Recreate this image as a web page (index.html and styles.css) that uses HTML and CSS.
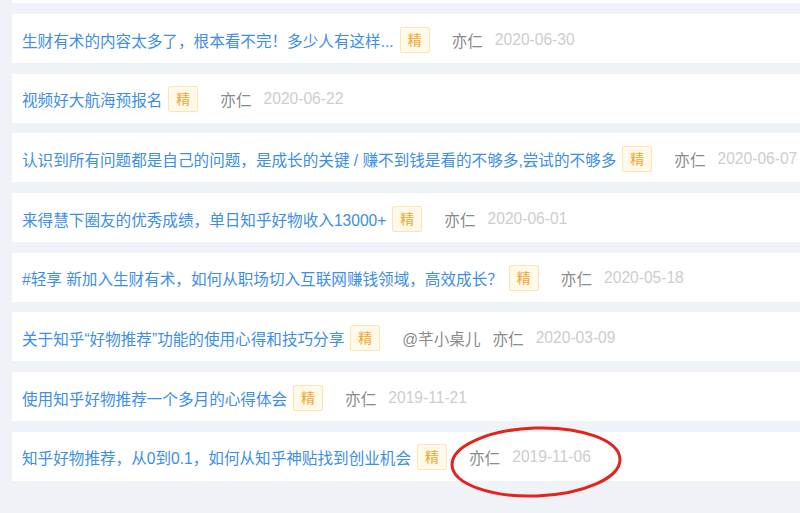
FILE: index.html
```html
<!DOCTYPE html>
<html>
	<head>
		<meta charset="UTF-8">
		<title>精华帖子</title>
		<link rel="stylesheet" href="styles.css">
	</head>
	<body>
		<div class="post-list">
			<!-- 上一条，只露出底边 -->
			<div class="post"></div>
			<div class="post">
				<a class="title">生财有术的内容太多了，根本看不完！多少人有这样...</a>
				<span class="tag">精</span>
				<span class="author">亦仁</span>
				<span class="date">2020-06-30</span>
			</div>
			<div class="post">
				<a class="title">视频好大航海预报名</a>
				<span class="tag">精</span>
				<span class="author">亦仁</span>
				<span class="date">2020-06-22</span>
			</div>
			<div class="post">
				<a class="title">认识到所有问题都是自己的问题，是成长的关键 / 赚不到钱是看的不够多,尝试的不够多</a>
				<span class="tag">精</span>
				<span class="author">亦仁</span>
				<span class="date">2020-06-07</span>
			</div>
			<div class="post">
				<a class="title">来得慧下圈友的优秀成绩，单日知乎好物收入13000+</a>
				<span class="tag">精</span>
				<span class="author">亦仁</span>
				<span class="date">2020-06-01</span>
			</div>
			<div class="post">
				<a class="title">#轻享 新加入生财有术，如何从职场切入互联网赚钱领域，高效成长？</a>
				<span class="tag">精</span>
				<span class="author">亦仁</span>
				<span class="date">2020-05-18</span>
			</div>
			<div class="post">
				<a class="title">关于知乎“好物推荐”功能的使用心得和技巧分享</a>
				<span class="tag">精</span>
				<span class="author">@芊小桌儿</span>
				<span class="author">亦仁</span>
				<span class="date">2020-03-09</span>
			</div>
			<div class="post">
				<a class="title">使用知乎好物推荐一个多月的心得体会</a>
				<span class="tag">精</span>
				<span class="author">亦仁</span>
				<span class="date">2019-11-21</span>
			</div>
			<div class="post">
				<a class="title">知乎好物推荐，从0到0.1，如何从知乎神贴找到创业机会</a>
				<span class="tag">精</span>
				<span class="author">亦仁</span>
				<span class="date">2019-11-06</span>
				<!-- 圈出来的作者和日期 -->
				<svg class="mark" width="176" height="76" viewBox="0 0 176 76">
					<ellipse cx="88" cy="38" rx="84" ry="34" fill="none" stroke="#e3231c" stroke-width="3" transform="rotate(-2 88 38)"/>
				</svg>
			</div>
		</div>
	</body>
</html>
```

FILE: styles.css
```css
html{height: 100%;}
body{
	height: 100%;
	margin: 0;
	background: #eff2f6;
	overflow: hidden;
	font-family: "Liberation Sans", "Noto Sans CJK SC", sans-serif;
	font-size: 15.6px;
}
.post-list{
	width: 820px;
	margin-top: -45.7px;
	padding-left: 12px;
}
.post{
	position: relative;
	display: flex;
	align-items: center;
	height: 49px;
	margin-bottom: 10.7px;
	padding-left: 10px;
	background: #fff;
	white-space: nowrap;
}
.title{
	color: #3d8ee6;
	cursor: pointer;
	padding-top: 2px;
}
.tag{
	width: 28px;
	height: 24px;
	line-height: 24px;
	margin: 2px 10px 0 6px;
	text-align: center;
	font-size: 14px;
	color: #f3a52c;
	background: #fff9ea;
	border: 1px solid #fde6b4;
	border-radius: 2px;
}
.author{
	margin-left: 12px;
	padding-top: 2px;
	color: #8a8a8a;
}
.date{
	margin-left: 12px;
	padding-top: 2px;
	color: #cdcdcd;
}
.mark{
	position: absolute;
	left: 436px;
	top: -8px;
}
```
